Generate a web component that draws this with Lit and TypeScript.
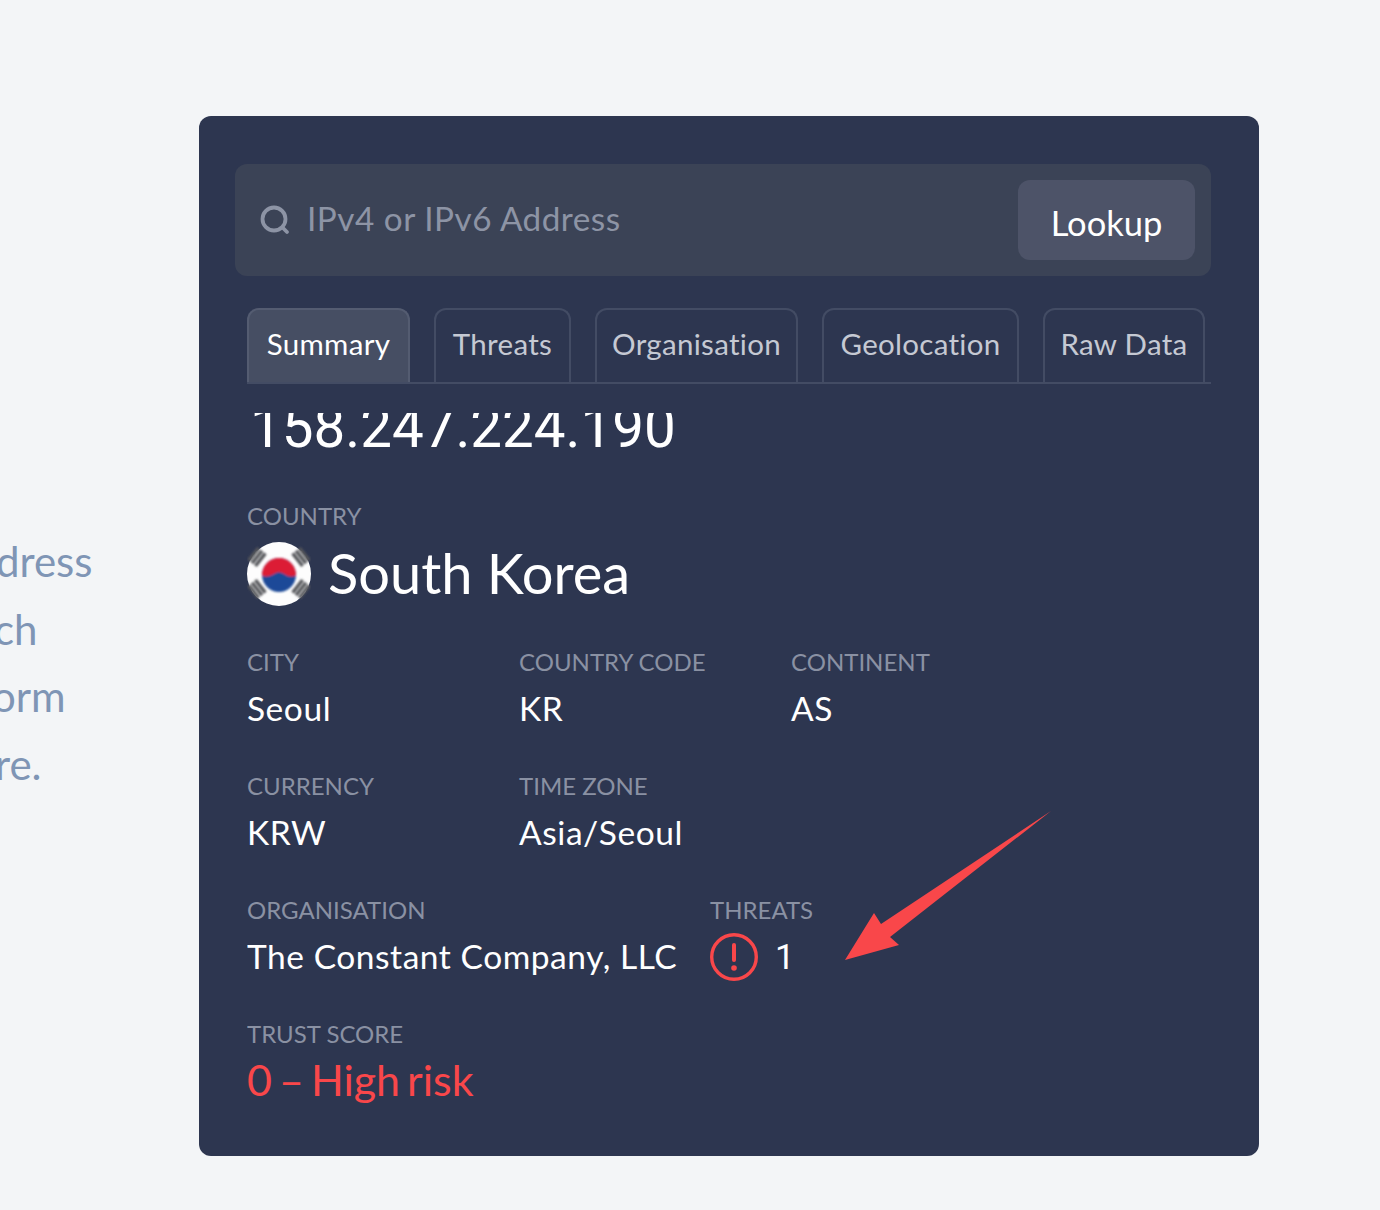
import { LitElement, html, css, svg } from "lit";
import { customElement } from "lit/decorators.js";

const tabs: [string, number][] = [["Summary", 163], ["Threats", 137], ["Organisation", 203], ["Geolocation", 197], ["Raw Data", 162]];

@customElement("app-root")
export class AppRoot extends LitElement {
  static styles = css`
    :host { display: block; height: 1210px; background: #f3f5f7; position: relative; overflow: hidden;
      font-family: "Lato", "Noto Sans", sans-serif; }
    .page { display: flex; padding-top: 116px; }
    .side { width: 199px; flex: none; overflow: hidden; padding-top: 412px; color: #7f95b5; font-size: 42px; line-height: 67.6px; white-space: nowrap; }
    .side div { height: 67.6px; }
    .l1 { margin-left: -4px; } .l2 { margin-left: -6px; } .l3 { margin-left: -8px; } .l4 { margin-left: -5px; }
    .card { width: 1060px; height: 1040px; box-sizing: border-box; background: #2d3650; border-radius: 12px; padding: 48px 48px 0 36px; color: #fff; overflow: hidden; }
    .search { height: 112px; box-sizing: border-box; background: #3b4356; border-radius: 12px; display: flex; align-items: center; padding: 0 16px 0 24px; }
    .search svg { width: 32px; height: 32px; flex: none; }
    .ph { flex: 1; margin-left: 16px; font-size: 33.3px; color: #8d94a5; letter-spacing: .5px; padding-bottom: 4px; }
    .btn { width: 177px; height: 80px; background: #4d5368; border-radius: 12px; display: flex; align-items: center; justify-content: center; font-size: 34.5px; color: #fff; padding-top: 4px; box-sizing: border-box; }
    .tabs { margin: 32px 0 0 12px; display: flex; gap: 24px; border-bottom: 2px solid #434c64; height: 76px; box-sizing: border-box; }
    .tab { height: 74px; box-sizing: border-box; border: 2px solid #434c64; border-bottom: none; border-radius: 12px 12px 0 0; display: flex; align-items: center; justify-content: center; font-size: 29.5px; color: #c5c9d3; letter-spacing: .3px; padding-bottom: 6px; }
    .tab.on { background: #464e63; color: #fff; border-color: #545c71; }
    .body { margin-left: 12px; height: 772px; padding-top: 29px; overflow: hidden; box-sizing: border-box; }
    .ipw { height: 37px; overflow: hidden; padding-left: 3px; }
    .ipw span { display: block; font-family: "Roboto", sans-serif; font-size: 56.5px; line-height: 64px; margin-top: -17px; }
    .lab { font-size: 24px; line-height: 32px; color: #8a91a3; }
    .country { margin-top: 50px; }
    .cname { display: flex; align-items: center; gap: 17px; font-size: 56px; height: 64px; margin-top: 8px; }
    .cname svg { width: 64px; height: 64px; flex: none; margin-top: 4px; }
    .row { display: flex; margin-top: 40px; }
    .row.first { margin-top: 42px; }
    .f { width: 272px; }
    .f.org { width: 463px; }
    .val { font-size: 33.5px; letter-spacing: .55px; line-height: 44px; margin-top: 8px; height: 44px; }
    .thr { display: flex; align-items: center; gap: 17px; }
    .thr svg { width: 48px; height: 48px; flex: none; margin-top: 2px; }
    .thr span { font-family: "Roboto", sans-serif; font-size: 35px; padding-top: 3px; }
    .risk { font-size: 43px; word-spacing: -4px; color: #f9474a; line-height: 48px; margin-top: 6px; }
    .arrow { position: absolute; left: 840px; top: 806px; width: 216px; height: 160px; }
  `;

  flag() {
    const tri = (x: number, y: number, a: number) => svg`<g transform="translate(${x} ${y}) rotate(${a})" fill="#55565a">
      <rect x="-8" y="-6" width="16" height="3.4"/><rect x="-8" y="-1.7" width="16" height="3.4"/><rect x="-8" y="2.6" width="16" height="3.4"/></g>`;
    return svg`<svg viewBox="0 0 64 64">
      <defs><filter id="b"><feGaussianBlur stdDeviation="1"/></filter></defs>
      <circle cx="32" cy="32" r="32" fill="#fdfdfd"/>
      <g filter="url(#b)">
        ${tri(10, 15, -52)}${tri(54, 15, 52)}${tri(10, 47, 52)}${tri(54, 47, -52)}
        <circle cx="32" cy="33" r="17" fill="#1a4a98"/>
        <path d="M15 33a17 17 0 0 1 34 0c-2 2-7 2-10 0-4-3-8-4-12-1-4 2-8 4-12 1z" fill="#dc1c34"/>
      </g>
    </svg>`;
  }

  render() {
    return html`
      <div class="page">
        <div class="side">
          <div class="l1">dress</div><div class="l2">ch</div><div class="l3">orm</div><div class="l4">re.</div>
        </div>
        <div class="card">
          <div class="search">
            <svg viewBox="0 0 32 32" fill="none" stroke="#8d94a5" stroke-width="3.8" stroke-linecap="round"><circle cx="15" cy="15" r="11.5"/><path d="M23.5 23.5l4.5 4.5"/></svg>
            <div class="ph">IPv4 or IPv6 Address</div>
            <div class="btn">Lookup</div>
          </div>
          <div class="tabs">${tabs.map(([t, w], i) => html`<div class="tab ${i === 0 ? "on" : ""}" style="width:${w}px">${t}</div>`)}</div>
          <div class="body">
            <div class="ipw"><span>158.247.224.190</span></div>
            <div class="country lab">COUNTRY</div>
            <div class="cname">${this.flag()}<span>South Korea</span></div>
            <div class="row first">
              <div class="f"><div class="lab">CITY</div><div class="val">Seoul</div></div>
              <div class="f"><div class="lab">COUNTRY CODE</div><div class="val">KR</div></div>
              <div class="f"><div class="lab">CONTINENT</div><div class="val">AS</div></div>
            </div>
            <div class="row">
              <div class="f"><div class="lab">CURRENCY</div><div class="val">KRW</div></div>
              <div class="f"><div class="lab">TIME ZONE</div><div class="val">Asia/Seoul</div></div>
            </div>
            <div class="row">
              <div class="f org"><div class="lab">ORGANISATION</div><div class="val">The Constant Company, LLC</div></div>
              <div class="f"><div class="lab">THREATS</div><div class="val thr">
                <svg viewBox="0 0 48 48" fill="none" stroke="#f9474a" stroke-width="3.4"><circle cx="24" cy="24" r="22.3"/><path d="M24 12v15" stroke-width="4" stroke-linecap="round"/><circle cx="24" cy="35" r="2.8" fill="#f9474a" stroke="none"/></svg>
                <span>1</span></div></div>
            </div>
            <div class="row">
              <div class="f org"><div class="lab">TRUST SCORE</div><div class="risk">0 – High risk</div></div>
            </div>
          </div>
        </div>
      </div>
      <svg class="arrow" viewBox="840 806 216 160"><path d="M1051 811 L890 937 L899 945 L845 960 L874 913 L881 924 Z" fill="#f9474a"/></svg>
    `;
  }
}
